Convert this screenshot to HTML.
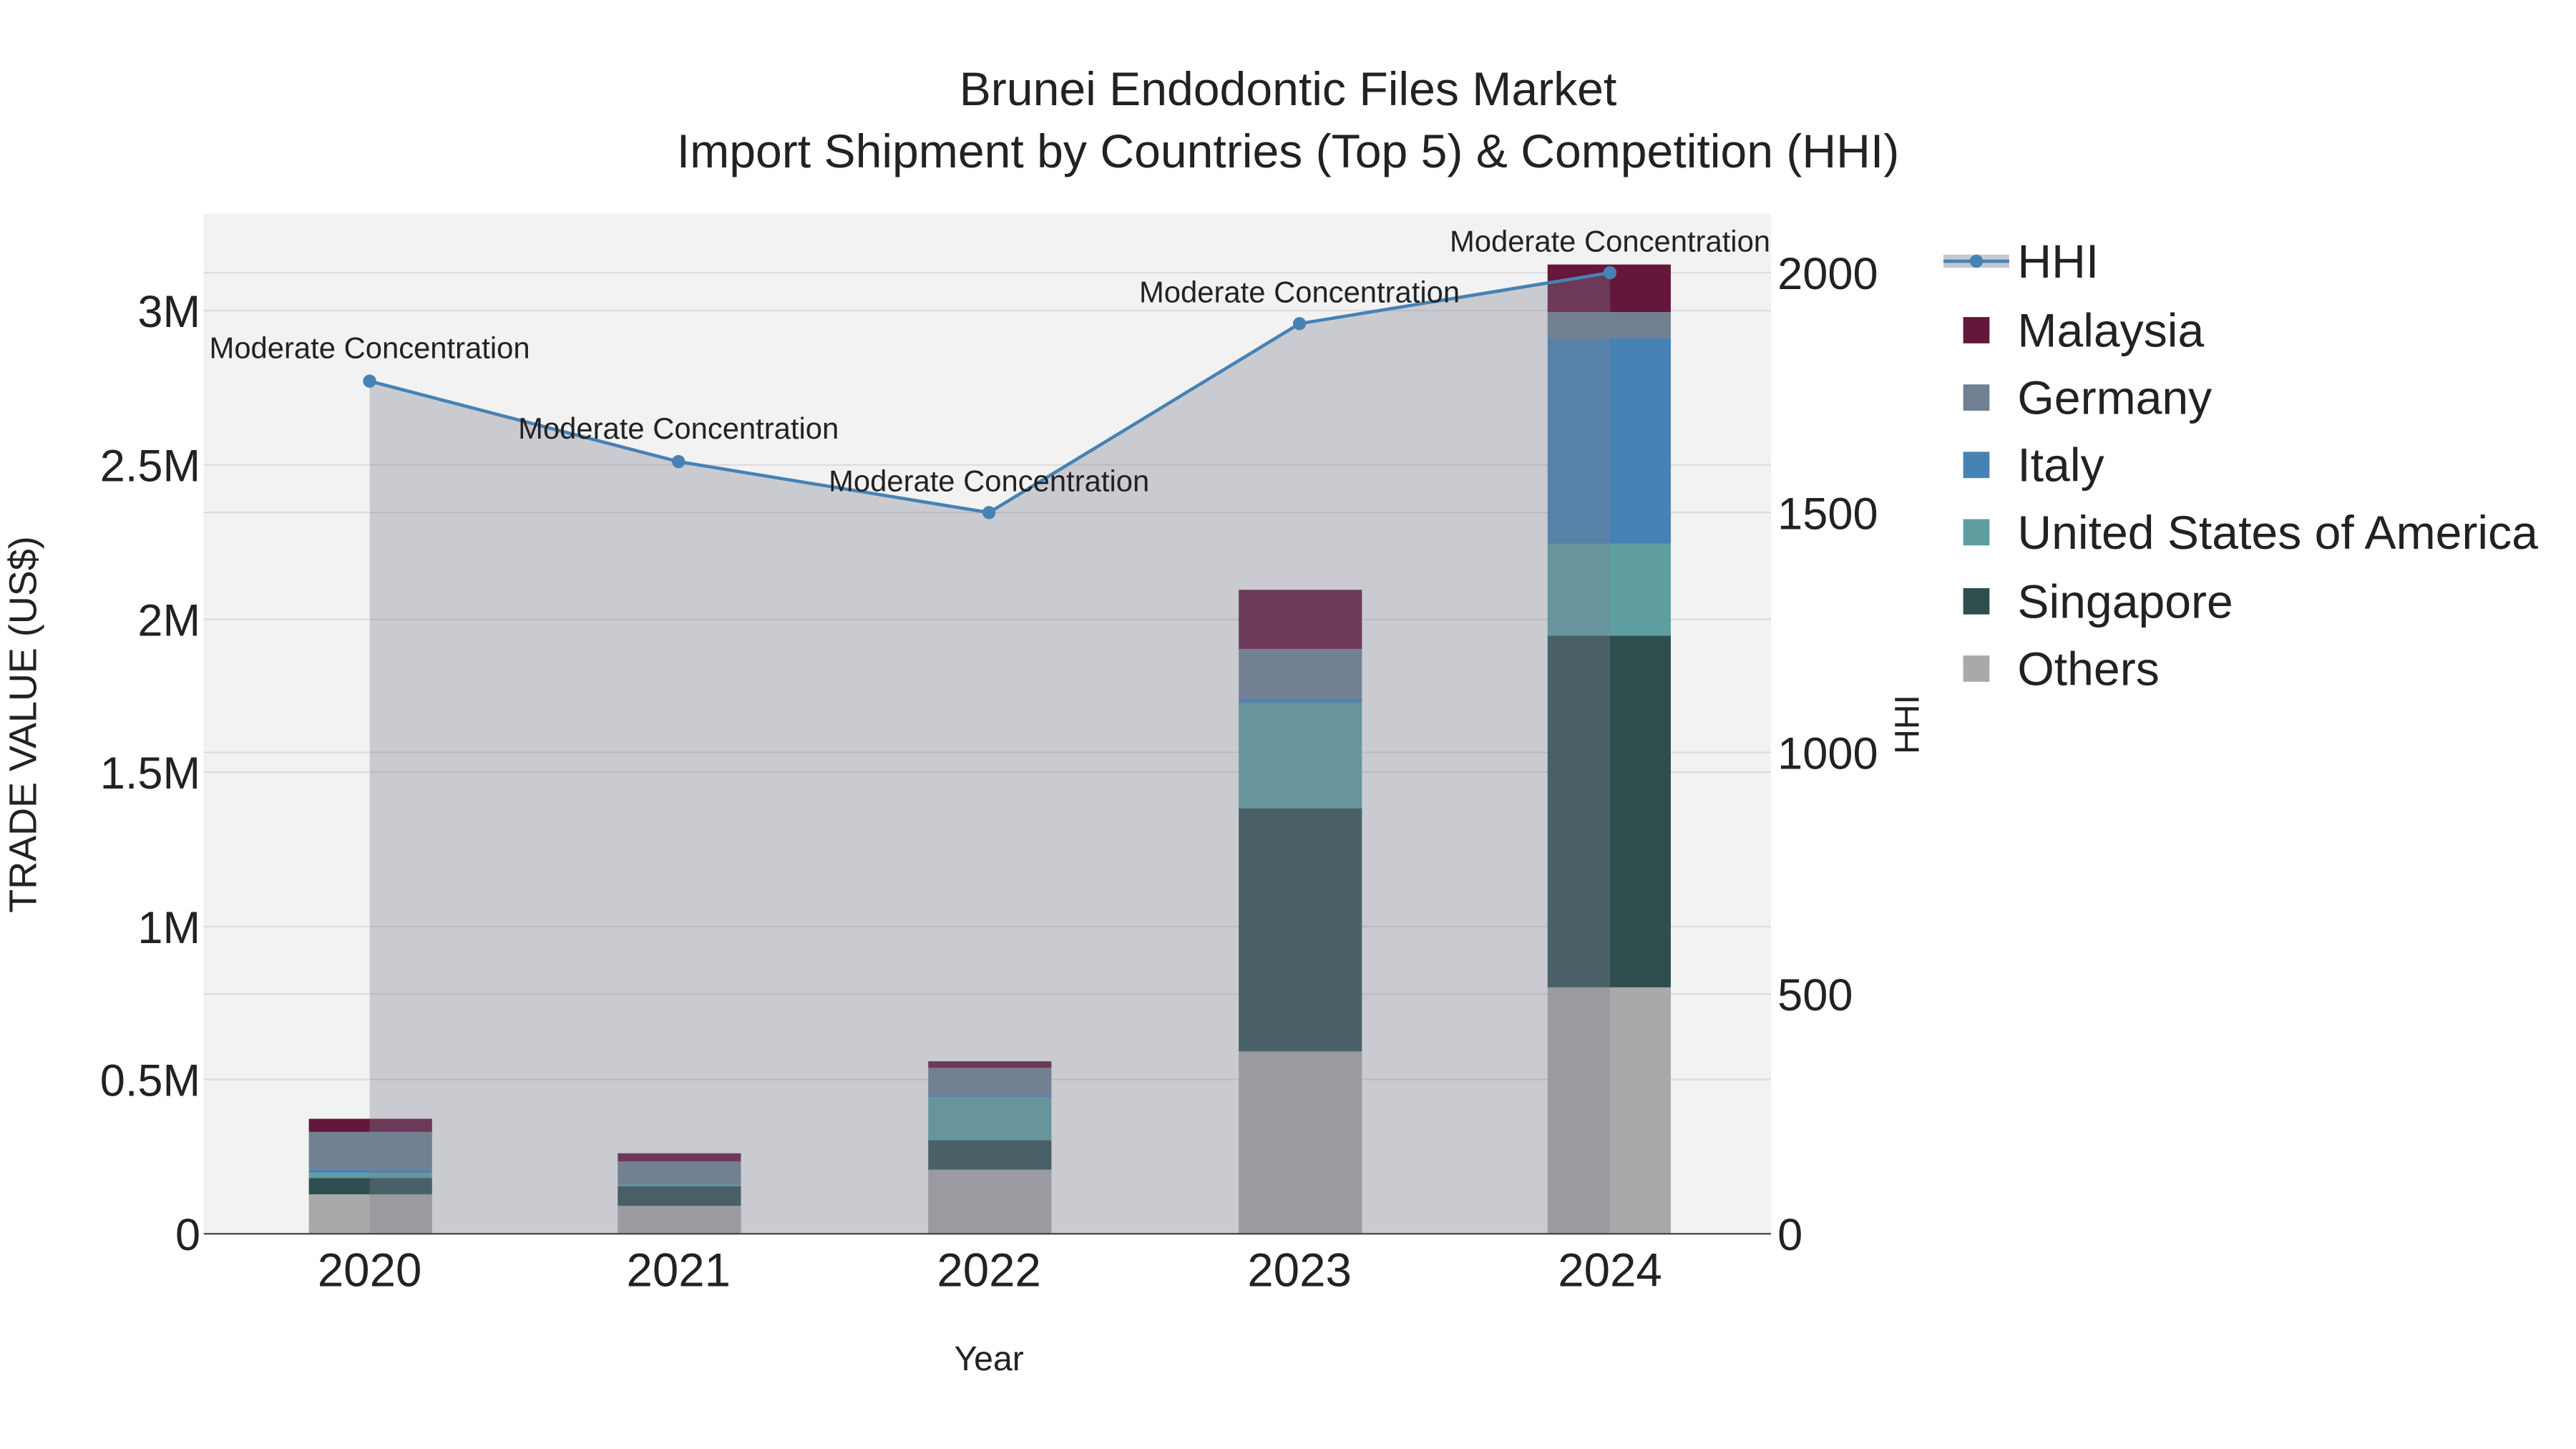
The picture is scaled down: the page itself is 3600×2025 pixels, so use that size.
<!DOCTYPE html>
<html><head><meta charset="utf-8"><style>
html,body{margin:0;padding:0;background:#fff;}
svg{display:block;}
text{font-family:"Liberation Sans",sans-serif;fill:#222;}
</style></head><body>
<svg width="3600" height="2025" viewBox="0 0 1568 882" xmlns="http://www.w3.org/2000/svg">
<rect x="0" y="0" width="1568" height="882" fill="#fff"/>
<rect x="124" y="130" width="954" height="621" fill="#f2f2f2"/>
<g stroke="#dcdcdc" stroke-width="1">
<line x1="124" x2="1078" y1="657" y2="657"/><line x1="124" x2="1078" y1="564" y2="564"/>
<line x1="124" x2="1078" y1="470" y2="470"/><line x1="124" x2="1078" y1="377" y2="377"/>
<line x1="124" x2="1078" y1="283" y2="283"/><line x1="124" x2="1078" y1="189" y2="189"/>
<line x1="124" x2="1078" y1="605" y2="605"/><line x1="124" x2="1078" y1="458" y2="458"/>
<line x1="124" x2="1078" y1="312" y2="312"/><line x1="124" x2="1078" y1="166" y2="166"/>
</g>
<g>
<rect x="188" y="727" width="75" height="24" fill="#a9a9a9"/>
<rect x="188" y="717" width="75" height="10" fill="#2f4f4f"/>
<rect x="188" y="714" width="75" height="3" fill="#5f9ea0"/>
<rect x="188" y="712" width="75" height="2" fill="#4682b4"/>
<rect x="188" y="689" width="75" height="23" fill="#708090"/>
<rect x="188" y="681" width="75" height="8" fill="#65163b"/>
<rect x="376" y="734" width="75" height="17" fill="#a9a9a9"/>
<rect x="376" y="722" width="75" height="12" fill="#2f4f4f"/>
<rect x="376" y="721" width="75" height="1" fill="#5f9ea0"/>
<rect x="376" y="720" width="75" height="1" fill="#4682b4"/>
<rect x="376" y="707" width="75" height="13" fill="#708090"/>
<rect x="376" y="702" width="75" height="5" fill="#65163b"/>
<rect x="565" y="712" width="75" height="39" fill="#a9a9a9"/>
<rect x="565" y="694" width="75" height="18" fill="#2f4f4f"/>
<rect x="565" y="668" width="75" height="26" fill="#5f9ea0"/>
<rect x="565" y="667" width="75" height="1" fill="#4682b4"/>
<rect x="565" y="650" width="75" height="17" fill="#708090"/>
<rect x="565" y="646" width="75" height="4" fill="#65163b"/>
<rect x="754" y="640" width="75" height="111" fill="#a9a9a9"/>
<rect x="754" y="492" width="75" height="148" fill="#2f4f4f"/>
<rect x="754" y="428" width="75" height="64" fill="#5f9ea0"/>
<rect x="754" y="425" width="75" height="3" fill="#4682b4"/>
<rect x="754" y="395" width="75" height="30" fill="#708090"/>
<rect x="754" y="359" width="75" height="36" fill="#65163b"/>
<rect x="942" y="601" width="75" height="150" fill="#a9a9a9"/>
<rect x="942" y="387" width="75" height="214" fill="#2f4f4f"/>
<rect x="942" y="331" width="75" height="56" fill="#5f9ea0"/>
<rect x="942" y="206" width="75" height="125" fill="#4682b4"/>
<rect x="942" y="190" width="75" height="16" fill="#708090"/>
<rect x="942" y="161" width="75" height="29" fill="#65163b"/>
</g>
<polygon points="225,751 225,232 413,281 602,312 791,197 980,166 980,751" fill="rgb(123,129,148)" fill-opacity="0.34"/>
<polyline points="225,232 413,281 602,312 791,197 980,166" fill="none" stroke="#4682b4" stroke-width="2"/>
<g fill="#4682b4"><circle cx="225" cy="232" r="4"/><circle cx="413" cy="281" r="4"/><circle cx="602" cy="312" r="4"/><circle cx="791" cy="197" r="4"/><circle cx="980" cy="166" r="4"/></g>
<line x1="124" x2="1078" y1="751" y2="751" stroke="#444" stroke-width="1"/>
<g font-size="18.2" text-anchor="middle">
<text x="225" y="218">Moderate Concentration</text>
<text x="413" y="267">Moderate Concentration</text>
<text x="602" y="299">Moderate Concentration</text>
<text x="791" y="184">Moderate Concentration</text>
<text x="980" y="153">Moderate Concentration</text>
</g>
<g font-size="27.5" text-anchor="end">
<text x="122" y="761">0</text><text x="122" y="667">0.5M</text><text x="122" y="574">1M</text>
<text x="122" y="480">1.5M</text><text x="122" y="387">2M</text><text x="122" y="293">2.5M</text><text x="122" y="199">3M</text>
</g>
<g font-size="27.5" text-anchor="start">
<text x="1082" y="761">0</text><text x="1082" y="615">500</text><text x="1082" y="468">1000</text>
<text x="1082" y="322">1500</text><text x="1082" y="176">2000</text>
</g>
<g font-size="28.5" text-anchor="middle">
<text x="225" y="783">2020</text><text x="413" y="783">2021</text><text x="602" y="783">2022</text>
<text x="791" y="783">2023</text><text x="980" y="783">2024</text>
</g>
<text x="602" y="834" font-size="21" text-anchor="middle">Year</text>
<text transform="translate(22,441) rotate(-90)" font-size="23.5" text-anchor="middle">TRADE VALUE (US$)</text>
<text transform="translate(1168,441) rotate(-90)" font-size="21" text-anchor="middle">HHI</text>
<text x="784" y="64" font-size="28.8" text-anchor="middle">Brunei Endodontic Files Market</text>
<text x="784" y="102" font-size="28.8" text-anchor="middle">Import Shipment by Countries (Top 5) &amp; Competition (HHI)</text>
<g>
<rect x="1183" y="155" width="40" height="8" fill="#c3c8d0"/>
<line x1="1183" x2="1223" y1="159" y2="159" stroke="#4682b4" stroke-width="2"/>
<circle cx="1203" cy="159" r="4" fill="#4682b4"/>
<rect x="1195" y="193" width="16" height="16" fill="#65163b"/>
<rect x="1195" y="234" width="16" height="16" fill="#708090"/>
<rect x="1195" y="275" width="16" height="16" fill="#4682b4"/>
<rect x="1195" y="316" width="16" height="16" fill="#5f9ea0"/>
<rect x="1195" y="358" width="16" height="16" fill="#2f4f4f"/>
<rect x="1195" y="399" width="16" height="16" fill="#a9a9a9"/>
<g font-size="28.8">
<text x="1228" y="169">HHI</text><text x="1228" y="211">Malaysia</text><text x="1228" y="252">Germany</text>
<text x="1228" y="293">Italy</text><text x="1228" y="334">United States of America</text>
<text x="1228" y="376">Singapore</text><text x="1228" y="417">Others</text>
</g>
</g>
</svg>
</body></html>
